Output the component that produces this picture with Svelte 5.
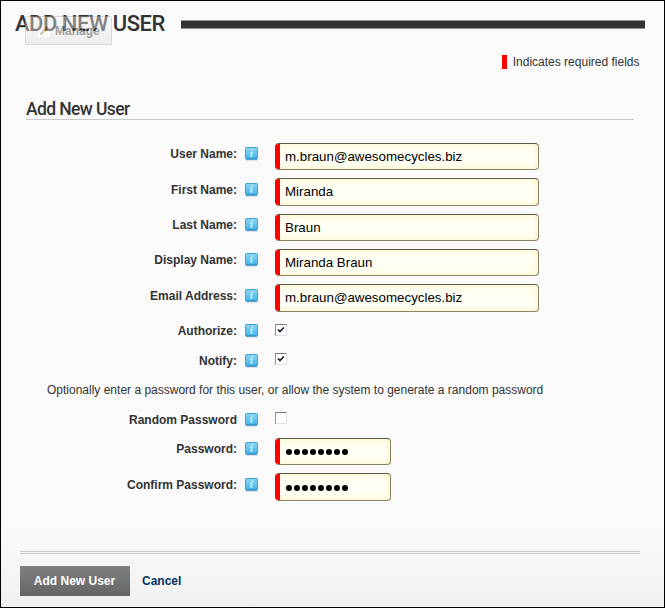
<script>
  const account = [
    { label: 'User Name:', value: 'm.braun@awesomecycles.biz', pitch: 35, box: 27, drop: 0 },
    { label: 'First Name:', value: 'Miranda', pitch: 36, box: 28, drop: 1 },
    { label: 'Last Name:', value: 'Braun', pitch: 35, box: 27, drop: 0 },
    { label: 'Display Name:', value: 'Miranda Braun', pitch: 35, box: 27, drop: 0 },
    { label: 'Email Address:', value: 'm.braun@awesomecycles.biz', pitch: 35, box: 28, drop: 1 },
    { label: 'Authorize:', check: true, on: true, pitch: 30, drop: 1, top: 5 },
    { label: 'Notify:', check: true, on: true, pitch: 30, drop: 1, top: 4 }
  ];
  const secrets = [
    { label: 'Random Password', check: true, on: false, pitch: 30, drop: 1, top: 4 },
    { label: 'Password:', secret: true, pitch: 35, box: 27, drop: 0 },
    { label: 'Confirm Password:', secret: true, pitch: 36, box: 28, drop: 1 }
  ];
</script>

{#snippet row(f)}
  <div class="row" style="height:{f.pitch}px">
    <div class="label" style="padding-top:{f.drop}px">{f.label}</div>
    <svg class="info" style="margin-top:{4 + f.drop}px" width="13" height="14" viewBox="0 0 13 14">
      <rect x="1" y="12.4" width="11" height="1.2" fill="#ccd0d2" />
      <rect x=".5" y=".5" width="12" height="11.5" rx=".8" fill="url(#blue)" stroke="#3fa3d8" />
      <path d="M1 12h11" stroke="#2186c4" />
      <path d="M6.8 3.1h1.3M5.3 5.3h1.5L6 9h1.5" fill="none" stroke="#e9f9ff" stroke-width="1.2" />
    </svg>
    {#if f.check}
      <div class="check" style="margin-top:{f.top}px">
        {#if f.on}
          <svg width="8" height="8" viewBox="0 0 8 8"><path d="M1 3.4 3 5.6 6.8 1.6" fill="none" stroke="#112" stroke-width="1.5" /></svg>
        {/if}
      </div>
    {:else}
      <div class="field" class:short={f.secret} style="height:{f.box}px">
        <span class="req"></span>
        {#if f.secret}
          <span class="dots">{#each Array(8) as _}<i></i>{/each}</span>
        {:else}
          <span class="value">{f.value}</span>
        {/if}
      </div>
    {/if}
  </div>
{/snippet}

<svg class="defs" width="0" height="0"><defs><linearGradient id="blue" x1="0" y1="0" x2="0" y2="1"><stop offset="0" stop-color="#8ad5f2" /><stop offset="1" stop-color="#43b5e8" /></linearGradient></defs></svg>
<main>
  <header>
    <h1>ADD NEW USER</h1>
    <div class="bar"></div>
    <div class="manage">
      <svg width="12" height="12" viewBox="0 0 12 12"><path d="M0 0h12v12H0z" fill="#fff" /><path d="m2 10 1-3 5-5 2 2-5 5z" fill="#d09a3c" /><path d="m7.5 2.5 2 2L11 3 9 1z" fill="#a85c4c" /><path d="m2 10 1-3 2 2z" fill="#665a48" /></svg>
      <span>Manage</span>
    </div>
  </header>
  <div class="legend"><i></i><span>Indicates required fields</span></div>
  <h2>Add New User</h2>
  <section>
    {#each account as f}{@render row(f)}{/each}
    <p>Optionally enter a password for this user, or allow the system to generate a random password</p>
    {#each secrets as f}{@render row(f)}{/each}
  </section>
  <footer>
    <button>Add New User</button>
    <a href="#cancel">Cancel</a>
  </footer>
</main>

<style>
  .defs { position: absolute; }
  main {
    box-sizing: border-box;
    width: 665px;
    height: 608px;
    border: 1px solid #000;
    background: linear-gradient(#fafafa 0, #fafafa 525px, #f1f1f1 100%);
    font: 12px/22px "Liberation Sans", Arial, sans-serif;
    color: #333;
    overflow: hidden;
  }
  header { position: relative; display: flex; height: 48px; padding-left: 14px; }
  h1 { margin: 0; padding-top: 9px; width: 166px; font: 500 22px/28px Roboto, sans-serif; letter-spacing: -.48px; white-space: nowrap; }
  .bar { box-sizing: border-box; width: 464px; height: 9px; margin-top: 19px; background: #333; border: solid #929292; border-width: 1px 0; }
  .manage {
    position: absolute; left: 24px; top: 15px; box-sizing: border-box; width: 87px; height: 29px;
    display: flex; align-items: center; gap: 5px; padding-left: 12px;
    border: 1px solid #aaa; border-radius: 2px; background: linear-gradient(#f4f4f4, #dedede); opacity: .42;
    font-weight: bold; font-size: 12px; color: #222;
  }
  .legend { display: flex; justify-content: flex-end; align-items: center; gap: 6px; height: 26px; padding-right: 24.5px; }
  .legend i { width: 5px; height: 14px; background: #f00; }
  h2 { box-sizing: border-box; width: 608px; height: 45px; margin: 0 0 0 25px; padding-top: 21px; border-bottom: 1px solid #c9c9c9; font: 500 17.5px/26px Roboto, sans-serif; letter-spacing: -.6px; }
  section { height: 431px; padding-top: 23px; box-sizing: border-box; }
  .row { display: flex; align-items: flex-start; }
  .label { width: 236px; text-align: right; font-weight: bold; white-space: nowrap; }
  .info { display: block; margin-left: 8px; margin-right: 17px; flex: none; }
  .field {
    box-sizing: border-box; display: flex; align-items: center; width: 264px; overflow: hidden;
    border: 1px solid #8c8360; border-top-color: #5b5947; border-left: 0; border-radius: 4px;
    background: #fffff4; box-shadow: inset 0 0 7px #fcf1be; color: #000;
  }
  .short { width: 116px; }
  .req { width: 5px; height: 100%; background: #f00; flex: none; }
  .value { margin-left: 5px; font-size: 13.333px; white-space: nowrap; }
  .dots { display: flex; gap: 2px; margin: 1px 0 0 6px; }
  .dots i { width: 6px; height: 6px; border-radius: 50%; background: #000; }
  .check { box-sizing: border-box; display: flex; align-items: center; justify-content: center; width: 12px; height: 12px; border: 1px solid #dfdfe5; border-top-color: #777; border-left-color: #8b929c; background: #fff; }
  p { margin: 0 0 0 46px; height: 29px; white-space: nowrap; }
  footer { display: flex; align-items: flex-start; width: 620px; margin: 0 0 0 19px; border-top: 3px double #ccc; padding-top: 12px; }
  button { box-sizing: border-box; width: 110px; height: 30px; margin: 0 12px 0 0; padding: 0 1px 0 0; border: 0; background: linear-gradient(#808080, #646464); color: #fff; font: bold 12px/30px "Liberation Sans", Arial, sans-serif; }
  a { line-height: 30px; color: #036; font-weight: bold; text-decoration: none; }
</style>
